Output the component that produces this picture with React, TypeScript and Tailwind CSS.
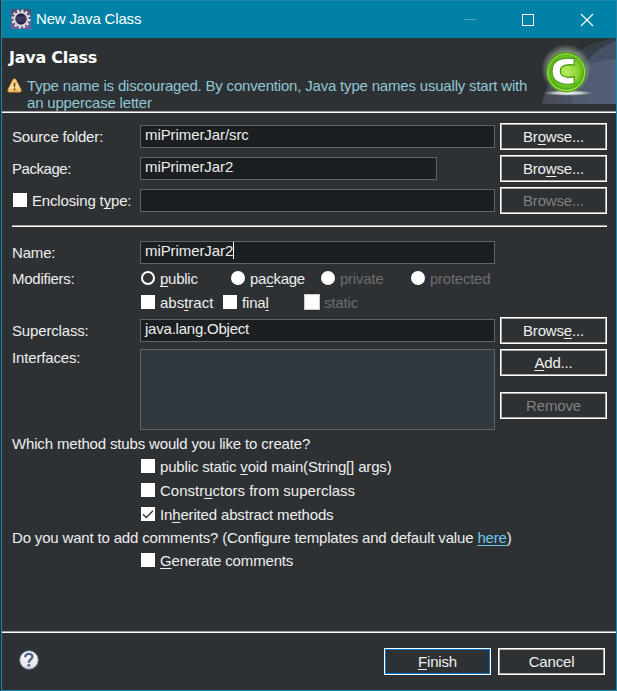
import type { ReactNode } from "react";

/** Label with an optional underlined mnemonic, marked by "_" before the letter. */
function Mnemonic({ text }: { text: string }) {
  const i = text.indexOf("_");
  if (i < 0) return <>{text}</>;
  return (
    <>
      {text.slice(0, i)}
      <span className="underline decoration-1 underline-offset-2 [text-decoration-skip-ink:none]">{text[i + 1]}</span>
      {text.slice(i + 2)}
    </>
  );
}

function Button({ text, disabled = false, primary = false }: { text: string; disabled?: boolean; primary?: boolean }) {
  return (
    <button
      className={`h-[27px] w-[107px] shrink-0 border border-white ${disabled ? "text-[#808080]" : "text-[#f0f0f0]"}`}
    >
      <span
        className={`flex h-[25px] items-center justify-center whitespace-pre border ${primary ? "border-[#0078d7]" : "border-[#adadad]"}`}
      >
        <span>
          <Mnemonic text={text} />
        </span>
      </span>
    </button>
  );
}

function Field({
  value = "",
  short = false,
  caret = false,
  tracking = "tracking-[-0.08px]",
}: {
  value?: string;
  short?: boolean;
  caret?: boolean;
  tracking?: string;
}) {
  return (
    <div
      className={`flex h-[23px] shrink-0 items-center border border-[#646464] bg-[#1b1f21] pb-1 pl-1 ${short ? "mr-[63px] w-[297px]" : "mr-[5px] w-[355px]"}`}
    >
      <span className={tracking}>{value}</span>
      {caret && <span className="h-[17px] w-px bg-white" />}
    </div>
  );
}

function Row({ label, children, className = "" }: { label: ReactNode; children: ReactNode; className?: string }) {
  return (
    <div className={`flex h-[27px] items-center ${className}`}>
      <div className="flex w-32 shrink-0 items-center whitespace-nowrap">{label}</div>
      {children}
    </div>
  );
}

function Check({
  text,
  checked = false,
  disabled = false,
  className = "",
}: {
  text: string;
  checked?: boolean;
  disabled?: boolean;
  className?: string;
}) {
  return (
    <div className={`flex h-6 items-center whitespace-nowrap ${disabled ? "text-[#6d6d6d]" : ""} ${className}`}>
      <span className={disabled ? "mr-1 size-4 border border-[#cccccc] bg-white" : "mr-[5px] size-3.5 bg-white"}>
        {checked && (
          <svg viewBox="0 0 14 14" className="size-3.5" fill="none" stroke="#333" strokeWidth="1.4">
            <path d="M2 7.2 5.3 10.5 12 3.8" />
          </svg>
        )}
      </span>
      <span className="pt-px">
        <Mnemonic text={text} />
      </span>
    </div>
  );
}

function Radio({ text, selected = false, disabled = false }: { text: string; selected?: boolean; disabled?: boolean }) {
  return (
    <div className={`flex w-[90px] items-center whitespace-nowrap ${disabled ? "text-[#6d6d6d]" : ""}`}>
      <span className={`mr-[5px] size-3.5 shrink-0 rounded-full ${selected ? "border-2 border-white bg-[#333]" : "bg-white"}`} />
      <span className="pt-px tracking-[-0.25px]">
        <Mnemonic text={text} />
      </span>
    </div>
  );
}

function Rule({ className = "" }: { className?: string }) {
  return <div className={`h-0.5 border-t border-b border-t-[#a0a0a0] border-b-white ${className}`} />;
}

function EclipseIcon() {
  return (
    <svg width="20" height="20" viewBox="0 0 20 20" className="-mt-px">
      <defs>
        <linearGradient id="gear-bg" x1="0" y1="0" x2="0" y2="1">
          <stop offset="0" stopColor="#4d4a70" />
          <stop offset="1" stopColor="#765c9c" />
        </linearGradient>
      </defs>
      <path d="M0 0H20V20H0Z" fill="url(#gear-bg)" />
      <circle cx="10" cy="10" r="8.3" fill="none" stroke="#deded8" strokeWidth="2.6" strokeDasharray="2.3 2.046" />
      <circle cx="10" cy="10" r="6.6" fill="#29234b" stroke="#dcdcd8" strokeWidth="1.8" />
      <path d="M5 8.3H15M4.5 10.2H15.5M5 12.1H15" stroke="#514778" />
    </svg>
  );
}

function WarningIcon() {
  return (
    <svg width="15" height="15" viewBox="0 0 15 15">
      <defs>
        <linearGradient id="warn" x1="0" y1="0" x2="0" y2="1">
          <stop offset="0" stopColor="#f8cb74" />
          <stop offset=".65" stopColor="#ffe3a0" />
          <stop offset="1" stopColor="#edaa3d" />
        </linearGradient>
      </defs>
      <path d="M7.4 .8Q8.4 .8 9 2L14 11.7Q14.7 14 12.7 14.1H2.3Q.3 14 1 11.7L5.8 2Q6.4 .8 7.4 .8Z" fill="url(#warn)" stroke="#e2a85a" strokeWidth=".8" />
      <path d="M6.5 4.8H8.5L8.1 9.5H6.9Z" fill="#704a16" />
      <path d="M6.6 10.4H8.4V12.2H6.6Z" fill="#704a16" />
    </svg>
  );
}

function ClassBanner() {
  return (
    <svg width="74" height="66" viewBox="0 0 74 66" className="block shrink-0">
      <defs>
        <linearGradient id="swoosh" x1="0" x2="1">
          <stop offset="0" stopColor="#474b53" />
          <stop offset="1" stopColor="#535e78" />
        </linearGradient>
        <radialGradient id="ball" cx=".5" cy=".48" r=".53">
          <stop offset="0" stopColor="#b9ed64" />
          <stop offset=".6" stopColor="#86d32c" />
          <stop offset=".85" stopColor="#4fac18" />
          <stop offset="1" stopColor="#a2e64c" />
        </radialGradient>
        <radialGradient id="glow">
          <stop offset=".65" stopColor="#c8d0bd" stopOpacity=".6" />
          <stop offset="1" stopColor="#c8d0bd" stopOpacity="0" />
        </radialGradient>
        <radialGradient id="floor">
          <stop offset="0" stopColor="#fff" />
          <stop offset=".55" stopColor="#dce0dc" stopOpacity=".8" />
          <stop offset="1" stopColor="#c0c5c8" stopOpacity="0" />
        </radialGradient>
      </defs>
      <path d="M0 66C5 33 33 5 74 0V66Z" fill="#383e48" />
      <path d="M30 66C32 35 48 12 74 3V66Z" fill="#465066" />
      <path d="M0 66Q4 50 11 43Q45 23 74 21V66Z" fill="url(#swoosh)" />
      <path d="M30 66Q30 50 36 31Q54 22 74 21V66Z" fill="#56617a" opacity=".5" />
      <circle cx="24" cy="31" r="25" fill="url(#glow)" />
      <ellipse cx="26" cy="55" rx="25" ry="2.8" fill="url(#floor)" />
      <circle cx="24.3" cy="34.3" r="19.6" fill="url(#ball)" stroke="#4a9e19" strokeWidth="1.2" />
      <circle cx="24.3" cy="34.3" r="18.3" fill="none" stroke="#b8ef63" strokeWidth="1" opacity=".8" />
      <path d="M32.2 20.6V27.2L28 26.7C21.5 26.7 18.3 29 18.3 33.2S21.5 39.3 28 39.3L32.2 38.8V45.5C19.5 48 10 43.8 10 33.4S18.5 18.6 32.2 20.6Z" fill="#fff" stroke="#459713" strokeWidth="1.2" />
    </svg>
  );
}

function HelpIcon() {
  return (
    <svg width="20" height="20" viewBox="0 0 20 20" className="mb-[3px]">
      <defs>
        <linearGradient id="help" x1="0" y1="0" x2="0" y2="1">
          <stop offset="0" stopColor="#fff" />
          <stop offset="1" stopColor="#dedfe3" />
        </linearGradient>
      </defs>
      <circle cx="10" cy="10" r="9.3" fill="url(#help)" stroke="#687998" strokeWidth="1" />
      <path d="M6.2 7.2C6.2 4.8 7.9 3.9 9.8 3.9S13.4 5 13.4 6.8C13.4 9.3 9.8 9.4 9.8 12.7" fill="none" stroke="#536486" strokeWidth="2.4" />
      <path d="M8.5 14.2H11.2V16.6H8.5Z" fill="#536486" />
    </svg>
  );
}

export default function App() {
  return (
    <div className="h-[691px] w-[617px] overflow-hidden bg-[#2a2d30] pl-px font-['Liberation_Sans',Arial,sans-serif] text-[15px] leading-[17px] tracking-[-0.16px] text-[#eeeeee]">
      <div className="flex h-[691px] w-[616px] flex-col border border-[#1b87a9] bg-[#2d3134]">
        <header className="flex h-[37px] shrink-0 items-center bg-[#0082a6] pl-[9px] text-white">
          <EclipseIcon />
          <span className="ml-[5px] grow pb-[2px]">New Java Class</span>
          <svg width="132" height="14" viewBox="0 0 132 14" className="mr-[21px] mt-px" fill="none" stroke="white">
            <path d="M1 6.5H13" opacity=".3" />
            <path d="M59.5 1.5H70.5V12.5H59.5Z" />
            <path d="M118 1 130 13M130 1 118 13" strokeWidth="1.15" />
          </svg>
        </header>

        <section className="flex h-[73px] shrink-0 justify-between">
          <div className="w-[540px] shrink-0 pl-[7px] pt-[11px]">
            <h1 className="font-['DejaVu_Sans',Verdana,sans-serif] text-[16px] font-bold leading-[18px] tracking-[-0.25px] text-white">
              Java Class
            </h1>
            <div className="mt-[10px] flex tracking-[-0.19px] text-[#91c6d5]">
              <div className="-ml-1 w-[22px] pl-[2px] pt-[1px]">
                <WarningIcon />
              </div>
              <p className="whitespace-nowrap">
                Type name is discouraged. By convention, Java type names usually start with
                <br />
                an uppercase letter
              </p>
            </div>
          </div>
          <ClassBanner />
        </section>
        <Rule className="shrink-0" />

        <main className="h-[518px] shrink-0 pl-[10px] pr-2 pt-[10px]">
          <Row label="Source folder:">
            <Field value="miPrimerJar/src" />
            <Button text="Br_owse..." />
          </Row>
          <Row label={<span className="tracking-[-0.45px]">Package:</span>} className="mt-[5px]">
            <Field value="miPrimerJar2" short />
            <Button text="Bro_wse..." />
          </Row>
          <Row label={<Check text="Enclosing t_ype:" className="-mt-px pl-px" />} className="mt-[5px]">
            <Field />
            <Button text="Browse..." disabled />
          </Row>
          <Rule className="mr-px mt-[11px]" />
          <Row label="Name:" className="mt-3">
            <Field value="miPrimerJar2" caret />
          </Row>
          <div className="flex">
            <div className="w-[129px] shrink-0 pt-1 tracking-[-0.25px]">Modifiers:</div>
            <div>
              <div className="flex h-6 items-center">
                <Radio text="_public" selected />
                <Radio text="pa_ckage" />
                <Radio text="private" disabled />
                <Radio text="protected" disabled />
              </div>
              <div className="flex">
                <Check text="abs_tract" className="w-[82px] tracking-normal" />
                <Check text="fina_l" className="w-[81px]" />
                <Check text="static" disabled />
              </div>
            </div>
          </div>
          <Row label="Superclass:" className="mt-[3px]">
            <Field value="java.lang.Object" tracking="tracking-[-0.22px]" />
            <Button text="Brows_e..." />
          </Row>
          <div className="mt-[5px] flex">
            <div className="w-32 shrink-0">Interfaces:</div>
            <div className="mr-[5px] h-[81px] w-[355px] border border-[#646464] bg-[#31383f]" />
            <div className="flex flex-col gap-4">
              <Button text="_Add..." />
              <Button text="Remove" disabled />
            </div>
          </div>
          <p className="mt-[5px] h-[19px]">Which method stubs would you like to create?</p>
          <div className="pl-[129px]">
            <Check text="public static _void main(String[] args)" />
            <Check text="Constr_uctors from superclass" className="tracking-normal" />
            <Check text="In_herited abstract methods" checked />
          </div>
          <p className="mt-[3px] h-[19px] whitespace-nowrap tracking-[-0.17px]">
            Do you want to add comments? (Configure templates and default value{" "}
            <a className="text-[#6fc5ee] underline decoration-1 underline-offset-2">here</a>)
          </p>
          <Check text="_Generate comments" className="pl-[129px]" />
        </main>
        <Rule className="shrink-0" />

        <footer className="flex grow items-center pl-[17px] pr-[11px]">
          <HelpIcon />
          <div className="ml-auto flex gap-[7px]">
            <Button text="_Finish" primary />
            <Button text="Cancel" />
          </div>
        </footer>
      </div>
    </div>
  );
}
